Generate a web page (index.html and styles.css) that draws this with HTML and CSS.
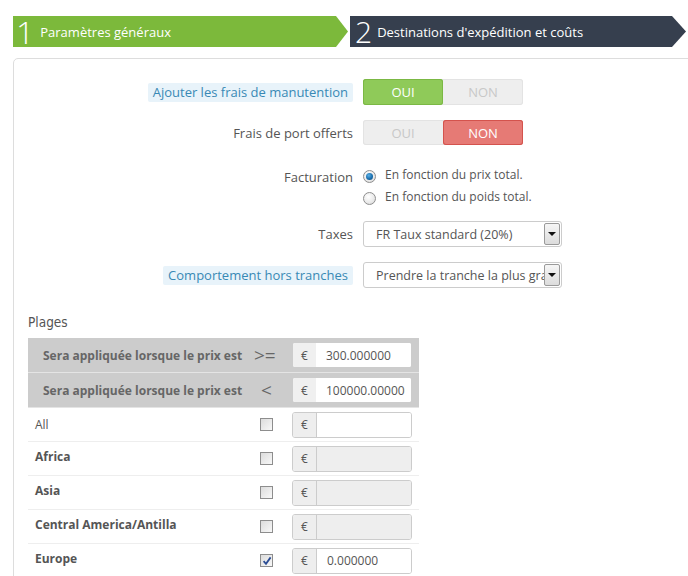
FILE: index.html
```html
<!DOCTYPE html>
<html lang="fr">
<head>
<meta charset="utf-8">
<title>Transporteur</title>
<link rel="stylesheet" href="styles.css">
</head>
<body>
<div class="wizard">
  <div class="step step-done"><span class="num">1</span><span class="step-label">Paramètres généraux</span></div>
  <div class="step step-current"><span class="num">2</span><span class="step-label">Destinations d'expédition et coûts</span></div>
</div>
<div class="panel">
  <div class="form">
    <div class="row row-sw1">
      <div class="label"><span class="hint">Ajouter les frais de manutention</span></div>
      <div class="switch">
        <span class="sw-opt sw-yes">OUI</span><span class="sw-opt">NON</span>
      </div>
    </div>
    <div class="row row-sw2">
      <div class="label">Frais de port offerts</div>
      <div class="switch">
        <span class="sw-opt">OUI</span><span class="sw-opt sw-no">NON</span>
      </div>
    </div>
    <div class="row row-radio">
      <div class="label label-top">Facturation</div>
      <div class="radios">
        <div class="radio-line"><span class="radio checked"></span>En fonction du prix total.</div>
        <div class="radio-line"><span class="radio"></span>En fonction du poids total.</div>
      </div>
    </div>
    <div class="row row-sel1">
      <div class="label">Taxes</div>
      <div class="select"><span class="sel-text">FR Taux standard (20%)</span><span class="sel-btn"></span></div>
    </div>
    <div class="row row-sel2">
      <div class="label"><span class="hint">Comportement hors tranches</span></div>
      <div class="select"><span class="sel-text">Prendre la tranche la plus grande</span><span class="sel-btn"></span></div>
    </div>
  </div>

  <div class="plages">Plages</div>
  <div class="ranges">
    <div class="trow thead">
      <div class="tlabel">Sera appliquée lorsque le prix est</div>
      <div class="op">&gt;=</div>
      <div class="igroup ig-head"><span class="addon">€</span><span class="ival"><span class="ival-text">300.000000</span></span></div>
    </div>
    <div class="trow thead">
      <div class="tlabel">Sera appliquée lorsque le prix est</div>
      <div class="op">&lt;</div>
      <div class="igroup ig-head"><span class="addon">€</span><span class="ival"><span class="ival-text">100000.000000</span></span></div>
    </div>
    <div class="trow tbody">
      <div class="zone zone-all">All</div>
      <div class="op"><span class="cb"></span></div>
      <div class="igroup"><span class="addon">€</span><span class="ival"></span></div>
    </div>
    <div class="trow tbody">
      <div class="zone">Africa</div>
      <div class="op"><span class="cb"></span></div>
      <div class="igroup"><span class="addon">€</span><span class="ival disabled"></span></div>
    </div>
    <div class="trow tbody">
      <div class="zone">Asia</div>
      <div class="op"><span class="cb"></span></div>
      <div class="igroup"><span class="addon">€</span><span class="ival disabled"></span></div>
    </div>
    <div class="trow tbody">
      <div class="zone">Central America/Antilla</div>
      <div class="op"><span class="cb"></span></div>
      <div class="igroup"><span class="addon">€</span><span class="ival disabled"></span></div>
    </div>
    <div class="trow tbody">
      <div class="zone">Europe</div>
      <div class="op"><span class="cb cb-checked"><svg viewBox="0 0 10 10" width="10" height="10"><path d="M1.6 5.2 L4 7.8 L8.6 1.4" fill="none" stroke="#2b4c94" stroke-width="1.8"/></svg></span></div>
      <div class="igroup"><span class="addon">€</span><span class="ival"><span class="ival-text">0.000000</span></span></div>
    </div>
  </div>
</div>
</body>
</html>
```

FILE: styles.css
```css
html, body {
  margin: 0;
  padding: 0;
  overflow: hidden;
  background: #fff;
}
body {
  font-family: "Open Sans", "Liberation Sans", sans-serif;
  font-size: 13px;
  color: #555;
  width: 688px;
  height: 576px;
}

/* wizard */
.wizard {
  display: flex;
  gap: 2px;
  margin: 16px 0 0 13px;
  height: 31px;
}
.step {
  display: flex;
  align-items: center;
  color: #fff;
  height: 31px;
}
.step-done {
  width: 335px;
  background: #7cb93b;
  clip-path: polygon(0 0, calc(100% - 12px) 0, 100% 50%, calc(100% - 12px) 100%, 0 100%);
}
.step-current {
  width: 336px;
  background: #363f4e;
  clip-path: polygon(0 0, calc(100% - 14px) 0, 100% 50%, calc(100% - 14px) 100%, 0 100%);
}
.num {
  font-size: 32px;
  font-weight: 300;
  line-height: 31px;
  margin-left: 3px;
  margin-right: 6px;
}
.step-current .num {
  font-size: 30px;
  margin-left: 5px;
  margin-right: 5px;
}
.step-label {
  font-size: 13px;
  padding-top: 1px;
}

/* panel */
.panel {
  margin: 11px -30px 0 13px;
  border: 1px solid #ddd;
  border-radius: 5px;
  height: 600px;
}
.form {
  padding-top: 20px;
}
.row {
  display: grid;
  grid-template-columns: 339px 1fr;
  column-gap: 10px;
  align-items: center;
}
.row-sw2 { margin-top: 15px; }
.row-radio { margin-top: 21px; align-items: start; }
.row-sel1 { margin-top: 15px; }
.row-sel2 { margin-top: 15px; }

.label {
  text-align: right;
  color: #555;
  font-size: 13px;
  line-height: 18px;
}
.label-top { padding-top: 2px; }
.hint {
  display: inline-block;
  background: #e8f3fa;
  color: #3889b5;
  padding: 0 5px;
  line-height: 19px;
  border-radius: 2px;
}

/* switch */
.switch {
  display: flex;
  width: 160px;
  height: 26px;
  background: #eee;
  border-radius: 3px;
  box-shadow: inset 0 0 0 1px #e3e3e3;
}
.sw-opt {
  flex: 1;
  display: flex;
  align-items: center;
  justify-content: center;
  color: #c8c8c8;
  font-size: 13px;
  border-radius: 3px;
}
.sw-yes {
  background: #8fca59;
  color: #fff;
  box-shadow: inset 0 0 0 1px #7bb844;
}
.sw-no {
  background: #e67a75;
  color: #fff;
  box-shadow: inset 0 0 0 1px #d4534d;
}
.row-sw2 .switch { height: 25px; }

/* radios */
.radios {
  display: flex;
  flex-direction: column;
  gap: 4px;
}
.radio-line {
  display: flex;
  align-items: center;
  line-height: 18px;
  font-size: 12px;
  color: #555;
}
.radio {
  width: 11px;
  height: 11px;
  border: 1px solid #8e8e8e;
  border-radius: 50%;
  background: radial-gradient(circle at 40% 35%, #fff 0, #e9e9e9 60%, #cfcfcf 100%);
  margin: 2px 9px 0 0;
  position: relative;
  flex: none;
}
.radio.checked::after {
  content: "";
  position: absolute;
  left: 2px;
  top: 2px;
  width: 7px;
  height: 7px;
  border-radius: 50%;
  background: radial-gradient(circle at 40% 35%, #5ab0e6 0, #1b6fae 55%, #0d4777 100%);
}

/* select */
.select {
  display: flex;
  align-items: center;
  width: 197px;
  height: 24px;
  border: 1px solid #ccc;
  border-radius: 3px;
  background: #fff;
  overflow: hidden;
}
.sel-text {
  flex: 1;
  min-width: 0;
  padding-left: 12px;
  white-space: nowrap;
  overflow: hidden;
  font-size: 12.5px;
  color: #555;
}
.sel-btn {
  flex: none;
  width: 14px;
  height: 20px;
  margin-right: 1px;
  border: 1px solid #9a9a9a;
  border-radius: 2px;
  background: linear-gradient(#f6f6f6, #dcdcdc);
  position: relative;
}
.sel-btn::after {
  content: "";
  position: absolute;
  left: 3px;
  top: 8px;
  border-left: 4px solid transparent;
  border-right: 4px solid transparent;
  border-top: 4px solid #111;
}

/* plages */
.plages {
  margin: 24px 0 0 14px;
  font-family: "DejaVu Sans Condensed", "DejaVu Sans", sans-serif;
  font-stretch: condensed;
  font-size: 13.5px;
  color: #555;
  line-height: 20px;
}
.ranges {
  margin: 6px 0 0 14px;
  width: 391px;
}
.trow {
  display: grid;
  grid-template-columns: minmax(0, 1fr) 33px 120px;
  column-gap: 9px;
  padding-right: 7px;
  align-items: center;
  height: 33px;
}
.thead {
  background: #ccc;
  padding-left: 15px;
  height: 34px;
  border-bottom: 1px solid #e4e4e4;
}
.tbody {
  padding-left: 7px;
  border-bottom: 1px solid #eee;
}
.tlabel {
  font-weight: bold;
  font-size: 12px;
  color: #666;
  white-space: nowrap;
}
.op {
  display: flex;
  justify-content: center;
  align-items: center;
  font-size: 19px;
  color: #666;
}
.thead .op {
  justify-content: flex-start;
  padding-left: 4px;
}
.thead:nth-child(2) .op { padding-left: 11px; }
.igroup {
  display: flex;
  min-width: 0;
  height: 24px;
  border: 1px solid #ccc;
  border-radius: 3px;
  overflow: hidden;
  background: #fff;
}
.ig-head {
  border: none;
  height: 24px;
  margin: 0 1px;
  border-radius: 2px;
}
.addon {
  flex: none;
  width: 23px;
  display: flex;
  align-items: center;
  justify-content: center;
  background: #eee;
  border-right: 1px solid #ccc;
  font-size: 12px;
  color: #555;
}
.ig-head .addon {
  border-right: none;
  background: #f0f0f0;
}
.ival {
  flex: 1;
  min-width: 0;
  display: flex;
  align-items: center;
  padding: 0 6px 0 10px;
  background: #fff;
  font-size: 12px;
  color: #555;
}
.ival-text {
  display: block;
  min-width: 0;
  white-space: nowrap;
  overflow: hidden;
}
.ival.disabled { background: #eee; }
.zone {
  font-weight: bold;
  font-size: 12px;
  color: #555;
  align-self: start;
  padding-top: 6px;
  line-height: 18px;
}
.zone.zone-all {
  font-weight: normal;
  align-self: center;
  padding-top: 0;
}
.cb {
  width: 11px;
  height: 11px;
  border: 1px solid #8d8d8d;
  background: linear-gradient(135deg, #dcdcdc, #f8f8f8);
  display: flex;
  align-items: center;
  justify-content: center;
}
```
